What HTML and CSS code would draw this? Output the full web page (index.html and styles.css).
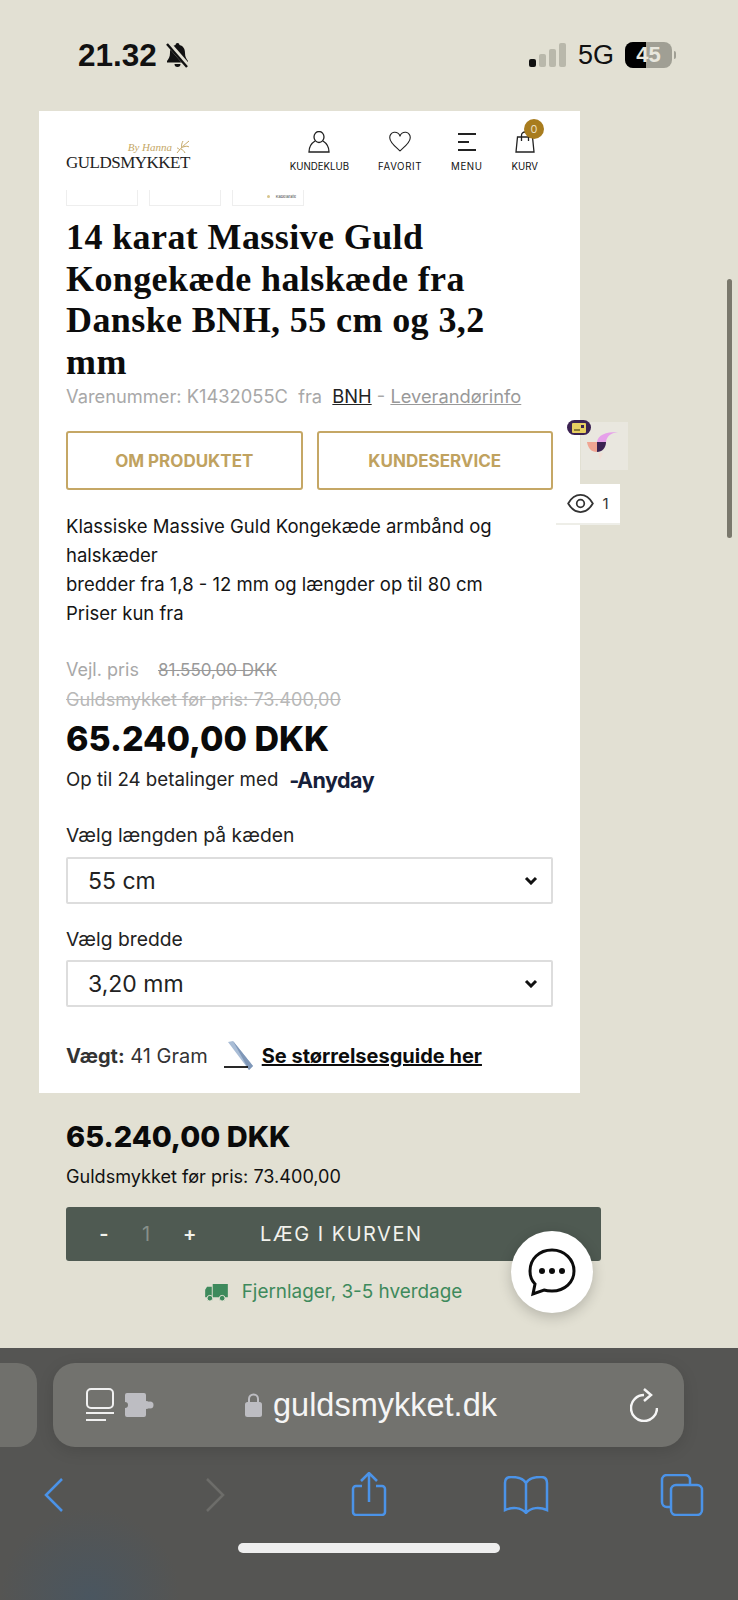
FILE: index.html
```html
<!DOCTYPE html>
<html lang="da">

<head>
  <meta charset="UTF-8">
  <meta name="viewport" content="width=device-width, initial-scale=1.0">
  <title>Guldsmykket</title>
  <link rel="stylesheet" href="styles.css">
</head>

<body>
  <div class="phone">

    <div class="status">
      <div class="status-left">
        <span class="time">21.32</span>
        <svg class="bell" viewBox="0 0 25 26"><path d="M12.5 1a2 2 0 0 1 2 2c4 1 5.500 4 5.500 8 0 4 1.500 6 3 8v1.500H2V19c1.500-2 3-4 3-8 0-4 1.500-7 5.500-8a2 2 0 0 1 2-2zM9.500 22h6a3 3 0 0 1-6 0z" fill="#111"/><path d="M3 1l20 23" stroke="#e2e0d3" stroke-width="5"/><path d="M2 2l20 23" stroke="#111" stroke-width="2.400"/></svg>
      </div>
      <div class="status-right">
        <div class="bars">
          <i class="bar bar1"></i><i class="bar bar2"></i><i class="bar bar3"></i><i class="bar bar4"></i>
        </div>
        <span class="net">5G</span>
        <div class="battery"><span class="battery-fill"></span><span class="battery-num">45</span></div>
        <i class="battery-cap"></i>
      </div>
    </div>

    <main class="page">
      <section class="card">
        <header class="nav">
          <div class="logo">
            <div class="logo-by">By Hanna
              <svg class="logo-leaf" viewBox="0 0 14 14"><path d="M1 13C4 9 8 5 13 1M6 8C5 5 6 3 7 1M7 7c3-1 5-1 6 0M5 9c2 1 3 2 4 4M4 10c-1-1-2-2-3-2" stroke="#c5a765" fill="none"/></svg>
            </div>
            <div class="logo-name">GULDSMYKKET</div>
          </div>
          <nav class="nav-items">
            <a class="nav-item">
              <svg viewBox="0 0 22 22"><ellipse cx="11" cy="6" rx="5" ry="5.500"/><path d="M7 10C3 12.500 1 16 1 21h20c0-5-2-8.500-6-11"/></svg>
              <span>KUNDEKLUB</span>
            </a>
            <a class="nav-item nav-wide">
              <svg viewBox="0 0 26 22"><path d="M13 21.500C7 16 1 11.500 1 6.500a5.500 5.500 0 0 1 12-2 5.500 5.500 0 0 1 12 2c0 5-6 9.500-12 15z"/></svg>
              <span>FAVORIT</span>
            </a>
            <a class="nav-item nav-wide">
              <svg viewBox="0 0 22 22"><path d="M2 3h18M2 11h11M2 19h18" class="menu-lines"/></svg>
              <span>MENU</span>
            </a>
            <a class="nav-item nav-cart">
              <svg viewBox="0 0 22 22"><path d="M3.500 6h15l1.500 15H2zM7.500 10V4.500a3.500 3.500 0 0 1 7 0V10"/></svg>
              <span>KURV</span>
              <b class="badge">0</b>
            </a>
          </nav>
        </header>

        <div class="thumbs">
          <div class="thumb"></div>
          <div class="thumb"></div>
          <div class="thumb"><i class="thumb-dot"></i><span class="thumb-text">Kabelarate</span></div>
        </div>

        <h1 class="title">14 karat Massive Guld Kongekæde halskæde fra Danske BNH, 55 cm og 3,2 mm</h1>

        <p class="meta">Varenummer: K1432055C &nbsp;fra &nbsp;<a class="meta-brand">BNH</a> - <a class="meta-link">Leverandørinfo</a></p>

        <div class="tabs">
          <a class="tab">OM PRODUKTET</a>
          <a class="tab">KUNDESERVICE</a>
        </div>

        <p class="desc">Klassiske Massive Guld Kongekæde armbånd og halskæder<br>bredder fra 1,8 - 12 mm og længder op til 80 cm<br>Priser kun fra</p>

        <div class="prices">
          <div class="vejl">Vejl. pris <s class="vejl-old">81.550,00 DKK</s></div>
          <div class="before"><s>Guldsmykket før pris: 73.400,00</s></div>
          <div class="price">65.240,00 DKK</div>
          <div class="anyday">Op til 24 betalinger med <span class="anyday-logo"><span class="anyday-dash">-</span>Anyday</span></div>
        </div>

        <label class="field-label">Vælg længden på kæden</label>
        <div class="select">55 cm
          <svg class="chevron" viewBox="0 0 14 9"><path d="M2 2l5 5 5-5"/></svg>
        </div>

        <label class="field-label field-second">Vælg bredde</label>
        <div class="select select-second">3,20 mm
          <svg class="chevron" viewBox="0 0 14 9"><path d="M2 2l5 5 5-5"/></svg>
        </div>

        <div class="weight">
          <span><b>Vægt:</b> 41 Gram</span>
          <svg class="ruler" viewBox="0 0 32 30"><path d="M4 1l5-1 20 25-4 4z" fill="#a9bdd6"/><path d="M9 0l20 25-4 4z" fill="#7f97b8"/><path d="M0 26h24" stroke="#111" stroke-width="1.800"/></svg>
          <a class="guide">Se størrelsesguide her</a>
        </div>
      </section>

      <section class="buy">
        <div class="buy-price">65.240,00 DKK</div>
        <div class="buy-before">Guldsmykket før pris: 73.400,00</div>
        <div class="cart-btn">
          <span class="qty-btn qty-minus">-</span>
          <span class="qty-num">1</span>
          <span class="qty-btn qty-plus">+</span>
          <span class="cart-text">LÆG I KURVEN</span>
        </div>
        <div class="stock">
          <svg class="truck" viewBox="0 0 24 18"><path d="M8 0h16v14H8zM0 6l2-3h5v11H0z" fill="#3e8a5c"/><circle cx="5" cy="15" r="3" fill="#3e8a5c" stroke="#e2e0d3"/><circle cx="18" cy="15" r="3" fill="#3e8a5c" stroke="#e2e0d3"/></svg>
          <span>Fjernlager, 3-5 hverdage</span>
        </div>
      </section>
    </main>

    <footer class="browser">
      <div class="url-row">
        <div class="prev-tab"></div>
        <div class="url-bar">
          <div class="url-tools">
            <svg class="reader" viewBox="0 0 28 34"><rect x="1" y="1" width="26" height="19" rx="4"/><path d="M0 25h28M0 32h20"/></svg>
            <svg class="puzzle" viewBox="0 0 30 24"><path d="M3 0h17a2 2 0 0 1 2 2v6a4 4 0 0 1 0 8v6a2 2 0 0 1-2 2H3a2 2 0 0 1-2-2v-7a3 3 0 0 0 0-6V2a2 2 0 0 1 2-2z" fill="#bdbdc2"/><circle cx="26" cy="12" r="3.500" fill="#bdbdc2"/></svg>
          </div>
          <div class="url-text">
            <svg class="lock" viewBox="0 0 17 24"><path d="M4 10V6a4.500 4.500 0 0 1 9 0v4" fill="none" stroke="#bdbdc2" stroke-width="2"/><rect y="9" width="17" height="15" rx="2.500" fill="#bdbdc2"/></svg>
            <span>guldsmykket.dk</span>
          </div>
          <svg class="reload" viewBox="0 0 28 34"><path d="M14 7A13 13 0 1 0 27 20M14 1l7 6-7 6"/></svg>
        </div>
      </div>
      <div class="toolbar">
        <svg class="tool tool-back" viewBox="0 0 20 34"><path d="M18 1L2 17l16 16"/></svg>
        <svg class="tool tool-fwd" viewBox="0 0 20 34"><path d="M2 1l16 16L2 33"/></svg>
        <svg class="tool tool-share" viewBox="0 0 36 44"><path d="M11 14H5a3 3 0 0 0-3 3v23a3 3 0 0 0 3 3h26a3 3 0 0 0 3-3V17a3 3 0 0 0-3-3h-6M18 30V2M10 9l8-8 8 8"/></svg>
        <svg class="tool tool-book" viewBox="0 0 46 38"><path d="M23 7C20 2 14 1 8 1 4 1 2 3 2 7v27c7-3 16-3 21 3 5-6 14-6 21-3V7c0-4-2-6-6-6-6 0-12 1-15 6zM23 7v30"/></svg>
        <svg class="tool tool-tabs" viewBox="0 0 44 42"><rect x="11" y="11" width="31" height="30" rx="5"/><path d="M11 33H7a5 5 0 0 1-5-5V6a5 5 0 0 1 5-5h18a5 5 0 0 1 5 5v5"/></svg>
      </div>
      <div class="home-row"><i class="home-bar"></i></div>
    </footer>

    <div class="scrollbar"></div>

    <div class="widget">
      <div class="widget-bird">
        <svg viewBox="0 0 47 48"><path d="M16 20C17 13 24 10 37 10c-6 1-11 3-12 10z" fill="#e6a0ea"/><path d="M16 20h9c0 6-4 10-9 10z" fill="#3b2252"/><path d="M6 20h10v10C10 30 7 26 6 20z" fill="#f0a593"/><path d="M17 31h5l-3 7z" fill="#f1e0d6"/></svg>
      </div>
      <div class="widget-pill">
        <svg viewBox="0 0 14 10"><rect width="14" height="10" rx="1" fill="#e7cf62"/><rect x="2" y="6" width="6" height="2" fill="#8a7a35"/><rect x="9" y="2" width="3" height="3" fill="#3b2252"/></svg>
      </div>
      <div class="widget-eye">
        <svg viewBox="0 0 28 20"><path d="M1 10C5 3 9 1 14 1s9 2 13 9c-4 7-8 9-13 9S5 17 1 10z"/><circle cx="14" cy="10" r="4"/></svg>
        <span>1</span>
      </div>
    </div>

    <div class="chat">
      <svg viewBox="0 0 50 50"><path d="M25 3C12 3 3 12 3 24c0 6 2 10 5 13l-2 10 11-4c3 1 5 1 8 1 13 0 22-9 22-20S38 3 25 3z"/><circle cx="15" cy="24" r="3" class="chat-dot"/><circle cx="25" cy="24" r="3" class="chat-dot"/><circle cx="35" cy="24" r="3" class="chat-dot"/></svg>
    </div>

  </div>
</body>

</html>
```

FILE: styles.css
```css
* {
  padding: 0;
  border: 0;
  margin: 0;
  box-sizing: border-box;
}

body {
  font-family: Inter, "Open Sans", sans-serif;
  background-color: #e2e0d3;
  color: #111;
}

.phone {
  width: 738px;
  height: 1600px;
  position: relative;
  overflow: hidden;
  display: flex;
  flex-direction: column;
  background-color: #e2e0d3;
}

/* status bar */
.status {
  height: 111px;
  flex: none;
  display: flex;
  justify-content: space-between;
  align-items: flex-start;
  padding: 42px 62px 0 78px;
}

.status-left {
  display: flex;
  align-items: center;
  gap: 8px;
  height: 26px;
}

.time {
  font-family: "Liberation Sans", sans-serif;
  font-weight: bold;
  font-size: 31.500px;
  line-height: 26px;
}

.bell {
  width: 25px;
  height: 26px;
}

.status-right {
  display: flex;
  align-items: center;
  height: 26px;
}

.bars {
  display: flex;
  align-items: flex-end;
  gap: 3px;
  height: 24px;
  margin-right: 12px;
}

.bar {
  width: 7px;
  border-radius: 2px;
  background-color: #b9b8ab;
}

.bar1 {
  height: 8px;
  background-color: #111;
}

.bar2 {
  height: 13px;
}

.bar3 {
  height: 18px;
}

.bar4 {
  height: 24px;
}

.net {
  font-family: "Liberation Sans", sans-serif;
  font-size: 27px;
  line-height: 26px;
  margin-right: 13px;
  width: 34px;
}

.battery {
  width: 47px;
  height: 26px;
  border-radius: 8px;
  background-color: #a09f94;
  position: relative;
  overflow: hidden;
  text-align: center;
}

.battery-fill {
  position: absolute;
  left: 0;
  top: 0;
  bottom: 0;
  width: 21px;
  background-color: #000;
}

.battery-num {
  position: relative;
  font-family: "Liberation Sans", sans-serif;
  font-weight: bold;
  font-size: 22px;
  line-height: 26px;
  color: #e8e7dd;
}

.battery-cap {
  width: 2px;
  height: 8px;
  margin-left: 2px;
  border-radius: 0 2px 2px 0;
  background-color: #a09f94;
}

/* page */
.page {
  flex: 1;
  overflow: hidden;
  padding-left: 39px;
}

.card {
  width: 541px;
  height: 982px;
  padding: 0 27px;
  background-color: white;
}

.nav {
  height: 79px;
  display: flex;
  justify-content: space-between;
  margin-right: 15px;
}

.logo {
  padding-top: 29px;
  width: 124px;
}

.logo-by {
  font-family: "Liberation Serif", serif;
  font-style: italic;
  font-size: 11px;
  line-height: 14px;
  height: 14px;
  color: #c5a765;
  text-align: right;
  display: flex;
  justify-content: flex-end;
  gap: 4px;
}

.logo-leaf {
  width: 14px;
  height: 14px;
}

.logo-name {
  font-family: "Liberation Serif", serif;
  font-size: 17px;
  line-height: 17px;
  white-space: nowrap;
  letter-spacing: -0.5px;
  color: #222;
}

.nav-items {
  display: flex;
  gap: 29px;
  padding-top: 20px;
}

.nav-item {
  display: flex;
  flex-direction: column;
  align-items: center;
  font-size: 9.700px;
  line-height: 14px;
  position: relative;
}

.nav-wide {
  letter-spacing: 0.600px;
}

.nav-item svg {
  width: 22px;
  height: 22px;
  fill: none;
  stroke: #222;
  stroke-width: 1.300;
  margin-bottom: 7px;
}

.nav-item .menu-lines {
  stroke-width: 1.800;
}

.badge {
  position: absolute;
  top: -12px;
  right: -6px;
  width: 20px;
  height: 20px;
  border-radius: 50%;
  background-color: #a87c1e;
  color: #eadfc0;
  font-weight: normal;
  font-size: 11px;
  line-height: 20px;
  text-align: center;
}

.thumbs {
  display: flex;
  gap: 11px;
  height: 16px;
}

.thumb {
  width: 72px;
  border: 1px solid #eee;
  border-top: 0;
  display: flex;
  align-items: center;
  justify-content: flex-end;
  gap: 6px;
  padding-right: 7px;
  padding-bottom: 2px;
}

.thumb-dot {
  width: 3px;
  height: 3px;
  border-radius: 50%;
  background-color: #d8c58c;
}

.thumb-text {
  font-size: 4px;
  color: #444;
}

.title {
  margin-top: 11px;
  max-width: 470px;
  font-family: "Liberation Serif", serif;
  font-weight: bold;
  font-size: 36px;
  letter-spacing: 0.400px;
  line-height: 41.5px;
  color: #0c0c0c;
}

.meta {
  margin-top: -1px;
  font-size: 18.300px;
  line-height: 28px;
  color: #a8a8a8;
  white-space: nowrap;
}

.meta-brand {
  color: #222;
  text-decoration: underline;
}

.meta-link {
  text-decoration: underline;
  color: #999;
}

.tabs {
  display: flex;
  gap: 14px;
  margin-top: 21px;
}

.tab {
  flex: 1;
  height: 59px;
  border: 2px solid #c5a765;
  border-radius: 3px;
  color: #c0a25f;
  font-weight: 700;
  font-size: 17px;
  display: flex;
  align-items: center;
  justify-content: center;
}

.desc {
  margin-top: 22px;
  font-size: 18.500px;
  line-height: 29px;
  color: #151515;
}

.prices {
  margin-top: 27px;
}

.vejl {
  font-size: 18px;
  line-height: 29px;
  color: #a8a8a8;
}

.vejl-old {
  margin-left: 14px;
  font-size: 17px;
  color: #999;
}

.before {
  font-size: 18.100px;
  line-height: 29px;
  color: #b8b8b8;
}

.price {
  margin-top: 5px;
  font-size: 34px;
  font-weight: 800;
  line-height: 40px;
  color: #0a0a0a;
}

.anyday {
  margin-top: 7px;
  font-size: 18.700px;
  line-height: 28px;
  display: flex;
  gap: 11px;
  color: #222;
}

.anyday-logo {
  font-size: 21.500px;
  font-weight: 700;
  letter-spacing: -0.500px;
  color: #16203a;
}

.anyday-dash {
  margin-right: -2px;
}

.field-label {
  display: block;
  margin-top: 27px;
  font-size: 19.300px;
  line-height: 28px;
  color: #222;
}

.field-second {
  margin-top: 21px;
}

.select {
  margin-top: 8px;
  height: 47px;
  border: 2px solid #ddd;
  border-radius: 2px;
  padding: 0 20px;
  display: flex;
  align-items: center;
  justify-content: space-between;
  font-size: 23px;
  color: #222;
}

.select-second {
  margin-top: 7px;
}

.chevron {
  width: 14px;
  height: 9px;
  fill: none;
  stroke: #111;
  stroke-width: 3;
  margin-right: -7px;
}

.weight {
  margin-top: 34px;
  display: flex;
  align-items: center;
  font-size: 20px;
  line-height: 28px;
  color: #333;
}

.ruler {
  width: 32px;
  height: 30px;
  margin-left: 16px;
  margin-right: 6px;
}

.guide {
  color: #0c0c0c;
  font-weight: 700;
  text-decoration: underline;
}

.buy {
  width: 562px;
  padding: 24px 0 0 27px;
}

.buy-price {
  font-size: 29px;
  font-weight: 800;
  line-height: 40px;
  color: #0a0a0a;
}

.buy-before {
  margin-top: 5px;
  font-size: 18.100px;
  line-height: 28px;
}

.cart-btn {
  margin-top: 17px;
  height: 54px;
  border-radius: 3px;
  background-color: #4f5a52;
  color: #f2f2ec;
  display: flex;
  align-items: center;
  padding-left: 32px;
  font-size: 20px;
}

.qty-btn {
  width: 12px;
  text-align: center;
  font-weight: 600;
}

.qty-num {
  width: 12px;
  margin: 0 31px 0 30px;
  text-align: center;
  color: #87908a;
}

.cart-text {
  margin-left: 65px;
  letter-spacing: 1.500px;
}

.stock {
  margin-top: 17px;
  display: flex;
  align-items: center;
  justify-content: center;
  gap: 14px;
  font-size: 18.900px;
  line-height: 28px;
  color: #3e8a5c;
}

.truck {
  width: 23px;
  height: 17px;
}

/* safari chrome */
.browser {
  height: 252px;
  flex: none;
  padding-top: 15px;
  background: radial-gradient(circle at 90px 250px, #4a5660, transparent 90px), #555553;
}

.url-row {
  display: flex;
  gap: 16px;
  height: 84px;
}

.prev-tab {
  width: 37px;
  border-radius: 0 20px 20px 0;
  background-color: #70706c;
}

.url-bar {
  width: 631px;
  border-radius: 22px;
  background-color: #72726e;
  box-shadow: 0 4px 16px rgba(0, 0, 0, 0.12);
  display: flex;
  align-items: center;
  justify-content: space-between;
  padding: 0 26px 0 33px;
  position: relative;
}

.url-tools {
  display: flex;
  align-items: center;
  gap: 10px;
}

.reader {
  width: 28px;
  height: 34px;
  fill: none;
  stroke: #f0f0f0;
  stroke-width: 2;
}

.puzzle {
  width: 30px;
  height: 24px;
}

.url-text {
  display: flex;
  align-items: center;
  gap: 11px;
  margin-right: 42px;
  font-family: "Liberation Sans", sans-serif;
  font-size: 32.500px;
  color: #f5f5f5;
}

.lock {
  width: 17px;
  height: 24px;
}

.reload {
  width: 28px;
  height: 34px;
  fill: none;
  stroke: #f5f5f5;
  stroke-width: 2.500;
}

.toolbar {
  position: relative;
  height: 96px;
  display: flex;
  align-items: center;
}

.tool {
  fill: none;
  stroke: #4b93e8;
  stroke-width: 2.500;
}

.tool-back {
  width: 20px;
  height: 34px;
  margin-left: 44px;
}

.tool-fwd {
  width: 20px;
  height: 34px;
  margin-left: 141px;
  stroke: #6d6d6a;
}

.tool-share {
  width: 36px;
  height: 44px;
  margin-left: 126px;
  margin-top: -3px;
}

.tool-book {
  width: 46px;
  height: 38px;
  margin-left: 116px;
}

.tool-tabs {
  width: 44px;
  height: 42px;
  margin-left: 111px;
}

.home-row {
  display: flex;
  justify-content: center;
}

.home-bar {
  width: 262px;
  height: 10px;
  border-radius: 5px;
  background-color: #eeeeee;
}

/* things lying over the page */
.scrollbar {
  position: absolute;
  left: 727px;
  top: 279px;
  width: 5px;
  height: 259px;
  border-radius: 3px;
  background-color: #7a786c;
}

.widget-bird {
  position: absolute;
  left: 581px;
  top: 422px;
  width: 47px;
  height: 48px;
  background-color: #e9e7df;
}

.widget-pill {
  position: absolute;
  left: 567px;
  top: 420px;
  width: 24px;
  height: 15px;
  border-radius: 8px;
  background-color: #3b2252;
  display: flex;
  align-items: center;
  justify-content: center;
}

.widget-pill svg {
  width: 14px;
  height: 10px;
}

.widget-eye {
  position: absolute;
  left: 556px;
  top: 484px;
  width: 64px;
  height: 41px;
  background-color: white;
  border-bottom: 2px solid #eeeee8;
  display: flex;
  align-items: center;
  justify-content: center;
  gap: 8px;
  font-size: 15px;
  color: #333;
}

.widget-eye svg {
  width: 27px;
  height: 19px;
  fill: none;
  stroke: #333;
  stroke-width: 1.800;
}

.chat {
  position: absolute;
  left: 511px;
  top: 1231px;
  width: 82px;
  height: 82px;
  border-radius: 50%;
  background-color: white;
  box-shadow: 0 4px 14px rgba(0, 0, 0, 0.2);
  display: flex;
  align-items: center;
  justify-content: center;
}

.chat svg {
  width: 50px;
  height: 50px;
  fill: none;
  stroke: #0c0c0c;
  stroke-width: 3;
}

.chat .chat-dot {
  fill: #0c0c0c;
  stroke: none;
}
```
